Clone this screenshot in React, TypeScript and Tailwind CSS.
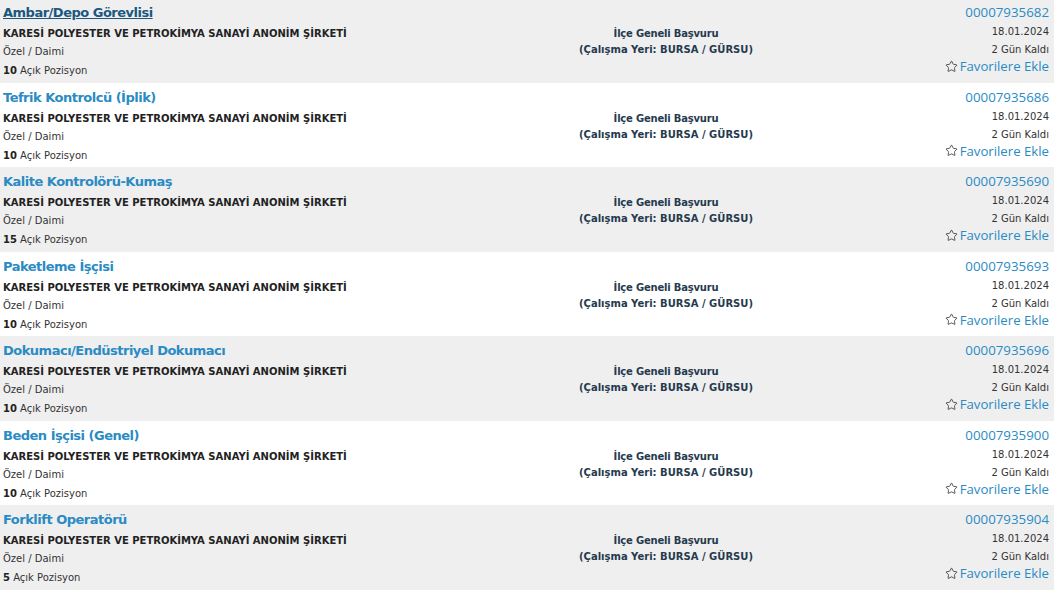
import { Star } from "lucide-react"

type Job = {
  title: string
  id: string
  count: number
}

const jobs: Job[] = [
  { title: "Ambar/Depo Görevlisi", id: "00007935682", count: 10 },
  { title: "Tefrik Kontrolcü (İplik)", id: "00007935686", count: 10 },
  { title: "Kalite Kontrolörü-Kumaş", id: "00007935690", count: 15 },
  { title: "Paketleme İşçisi", id: "00007935693", count: 10 },
  { title: "Dokumacı/Endüstriyel Dokumacı", id: "00007935696", count: 10 },
  { title: "Beden İşçisi (Genel)", id: "00007935900", count: 10 },
  { title: "Forklift Operatörü", id: "00007935904", count: 5 },
]

const verdana = { fontFamily: '"DejaVu Sans", Verdana, sans-serif' }
const segoe = { fontFamily: '"Open Sans", "Segoe UI", sans-serif' }

function JobRow({ job, index }: { job: Job; index: number }) {
  const first = index === 0
  return (
    <div
      className={`grid h-[84.5px] grid-cols-[560px_212px_1fr] ${index % 2 === 0 ? "bg-[#efefef]" : "bg-white"}`}
    >
      <div className="pl-[3px]" style={verdana}>
        <a
          href="#"
          className={`mt-[6px] block text-[13px] font-bold leading-[18px] tracking-[-0.5px] ${first ? "text-[#1c5780] underline" : "text-[#2a8bc4]"}`}
        >
          {job.title}
        </a>
        <div className="mt-[3px] text-[10px] font-bold leading-[18px] text-[#222]">
          KARESİ POLYESTER VE PETROKİMYA SANAYİ ANONİM ŞİRKETİ
        </div>
        <div className="text-[10px] leading-[18px] text-[#333]">Özel / Daimi</div>
        <div className="text-[10px] leading-[19px] text-[#333]">
          <b className="text-[#222]">{job.count}</b> Açık Pozisyon
        </div>
      </div>
      <div className="pt-[28px] text-center text-[10px] font-bold leading-[16px] text-[#263a4e]" style={verdana}>
        <div className="tracking-[-0.2px]">İlçe Geneli Başvuru</div>
        <div>(Çalışma Yeri: BURSA / GÜRSU)</div>
      </div>
      <div className="flex flex-col items-end pr-[5px] pt-[4px]">
        <a href="#" className="text-[13.3px] leading-[20px] text-[#2a8bc4]" style={segoe}>
          {job.id}
        </a>
        <div className="text-[10px] leading-[20px] text-[#333]" style={verdana}>
          18.01.2024
        </div>
        <div className="text-[10px] leading-[15px] text-[#333]" style={verdana}>
          2 Gün Kaldı
        </div>
        <a href="#" className="flex items-center gap-[2px] text-[13.2px] leading-[18px] text-[#2a8bc4]" style={segoe}>
          <Star className="h-[13px] w-[13px] text-[#333]" strokeWidth={1.5} />
          Favorilere Ekle
        </a>
      </div>
    </div>
  )
}

export default function App() {
  return (
    <div className="h-[591px] w-[1057px] overflow-hidden bg-white">
      <div className="-mt-[2px] mr-[3px]">
        {jobs.map((job, i) => (
          <JobRow key={job.id} job={job} index={i} />
        ))}
      </div>
    </div>
  )
}
